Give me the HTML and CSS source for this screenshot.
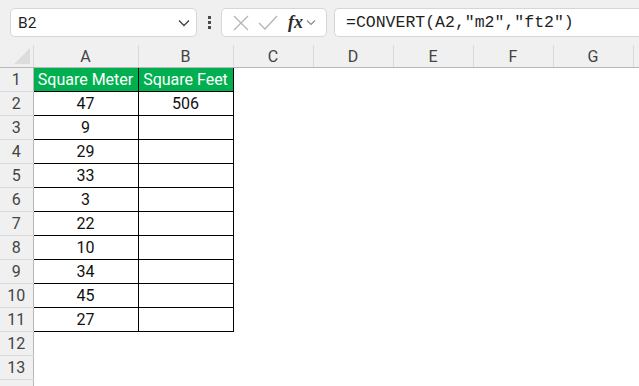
FILE: index.html
```html
<!DOCTYPE html>
<html lang="en">
<head>
<meta charset="utf-8">
<title>CONVERT - Square Meter to Square Feet</title>
<link rel="stylesheet" href="styles.css">
</head>
<body>

  <!-- Formula bar: name box, commands, formula -->
  <div class="formula-bar">
    <div class="name-box">
      <span class="cell-ref">B2</span>
      <svg class="chevron" width="12" height="8" viewBox="0 0 12 8">
        <path d="M1 1.5 L6 6.5 L11 1.5" />
      </svg>
    </div>
    <div class="grip"><i></i><i></i><i></i></div>
    <div class="cmd-box">
      <svg class="cmd" width="18" height="18" viewBox="0 0 18 18">
        <path d="M2 2 L16 16 M16 2 L2 16" />
      </svg>
      <svg class="cmd" width="20" height="18" viewBox="0 0 20 18">
        <path d="M1 9 L7 15 L19 2" />
      </svg>
      <span class="fx">fx</span>
      <svg class="chevron small" width="10" height="7" viewBox="0 0 10 7">
        <path d="M1 1.5 L5 5.5 L9 1.5" />
      </svg>
    </div>
    <div class="formula">=CONVERT(A2,"m2","ft2")</div>
  </div>

  <!-- Sheet grid -->
  <table class="sheet">
    <colgroup>
      <col class="c-head">
      <col class="c-a">
      <col class="c-b">
      <col class="c-std">
      <col class="c-std">
      <col class="c-std">
      <col class="c-std">
      <col class="c-std">
      <col class="c-std">
    </colgroup>
    <thead>
      <tr class="col-heads">
        <th class="corner"><span class="tri"></span></th>
        <th>A</th><th>B</th><th>C</th><th>D</th><th>E</th><th>F</th><th>G</th><th></th>
      </tr>
    </thead>
    <tbody>
      <tr>
        <th>1</th>
        <td class="data title">Square Meter</td>
        <td class="data title">Square Feet</td>
        <td></td><td></td><td></td><td></td><td></td><td></td>
      </tr>
      <tr><th>2</th><td class="data">47</td><td class="data">506</td><td></td><td></td><td></td><td></td><td></td><td></td></tr>
      <tr><th>3</th><td class="data">9</td><td class="data"></td><td></td><td></td><td></td><td></td><td></td><td></td></tr>
      <tr><th>4</th><td class="data">29</td><td class="data"></td><td></td><td></td><td></td><td></td><td></td><td></td></tr>
      <tr><th>5</th><td class="data">33</td><td class="data"></td><td></td><td></td><td></td><td></td><td></td><td></td></tr>
      <tr><th>6</th><td class="data">3</td><td class="data"></td><td></td><td></td><td></td><td></td><td></td><td></td></tr>
      <tr><th>7</th><td class="data">22</td><td class="data"></td><td></td><td></td><td></td><td></td><td></td><td></td></tr>
      <tr><th>8</th><td class="data">10</td><td class="data"></td><td></td><td></td><td></td><td></td><td></td><td></td></tr>
      <tr><th>9</th><td class="data">34</td><td class="data"></td><td></td><td></td><td></td><td></td><td></td><td></td></tr>
      <tr><th>10</th><td class="data">45</td><td class="data"></td><td></td><td></td><td></td><td></td><td></td><td></td></tr>
      <tr><th>11</th><td class="data">27</td><td class="data"></td><td></td><td></td><td></td><td></td><td></td><td></td></tr>
      <tr><th>12</th><td></td><td></td><td></td><td></td><td></td><td></td><td></td><td></td></tr>
      <tr><th>13</th><td></td><td></td><td></td><td></td><td></td><td></td><td></td><td></td></tr>
      <tr><th></th><td></td><td></td><td></td><td></td><td></td><td></td><td></td><td></td></tr>
    </tbody>
  </table>

</body>
</html>
```

FILE: styles.css
```css
html, body {
  margin: 0;
  padding: 0;
  background: #ffffff;
  overflow: hidden;
}

body {
  width: 639px;
  height: 386px;
  font-family: Roboto, "Liberation Sans", Arial, sans-serif;
}

/* Formula bar */
.formula-bar {
  display: flex;
  align-items: center;
  height: 45px;
  padding: 0 0 0 10px;
  box-sizing: border-box;
  background: #f0f0f0;
}

.name-box {
  display: flex;
  align-items: center;
  justify-content: space-between;
  width: 187px;
  height: 29px;
  box-sizing: border-box;
  padding: 0 6px 0 7px;
  background: #ffffff;
  border: 1px solid #d6d6d6;
  border-radius: 5px;
}
.cell-ref {
  font-size: 15.5px;
  color: #1f1f1f;
}

.chevron path {
  fill: none;
  stroke: #444;
  stroke-width: 1.4;
}
.chevron.small path { stroke: #8a8a8a; stroke-width: 1.2; }

.grip {
  display: flex;
  flex-direction: column;
  gap: 2px;
  margin: 0 10px 0 11px;
}
.grip i {
  display: block;
  width: 3px;
  height: 3px;
  background: #4a4a4a;
}

.cmd-box {
  display: flex;
  align-items: center;
  width: 106px;
  height: 29px;
  box-sizing: border-box;
  padding: 0 3px 0 10px;
  gap: 8px;
  background: #ffffff;
  border: 1px solid #d6d6d6;
  border-radius: 5px;
}
.cmd path {
  fill: none;
  stroke: #b4b4b4;
  stroke-width: 1.3;
}
.fx {
  font-family: "Liberation Serif", "DejaVu Serif", serif;
  font-style: italic;
  font-weight: bold;
  font-size: 18px;
  color: #2b2b2b;
  margin-left: 2px;
  margin-right: -5px;
}

.formula {
  flex: 1;
  height: 29px;
  margin-left: 7px;
  box-sizing: border-box;
  padding: 0 0 0 11px;
  line-height: 27px;
  background: #ffffff;
  border: 1px solid #d6d6d6;
  border-right: none;
  border-radius: 5px 0 0 5px;
  font-family: "Liberation Mono", "DejaVu Sans Mono", monospace;
  font-size: 16.5px;
  color: #1f1f1f;
  white-space: nowrap;
}

/* Sheet grid */
.sheet {
  border-collapse: collapse;
  table-layout: fixed;
  width: 713px;
  font-size: 16px;
}
.c-head { width: 33px; }
.c-a    { width: 105px; }
.c-b    { width: 95px; }
.c-std  { width: 80px; }

.sheet th {
  font-weight: normal;
  color: #444444;
  background: #f0f0f0;
  padding: 0;
}

.col-heads th {
  height: 22px;
  border-right: 1px solid #d9d9d9;
  border-bottom: 1px solid #b8b8b8;
  text-align: center;
}

.corner { position: relative; }
.tri {
  position: absolute;
  right: 3px;
  bottom: 3px;
  width: 0;
  height: 0;
  border-left: 16px solid transparent;
  border-bottom: 16px solid #dcdcdc;
}

tbody th {
  height: 23px;
  text-align: center;
  border-right: 1px solid #b8b8b8;
  border-bottom: 1px solid #dadada;
}

tbody td {
  padding: 0;
  height: 23px;
  text-align: center;
  color: #111111;
}

td.data {
  border: 1px solid #000000;
}

td.title {
  background: #00b050;
  color: #ffffff;
}
```
